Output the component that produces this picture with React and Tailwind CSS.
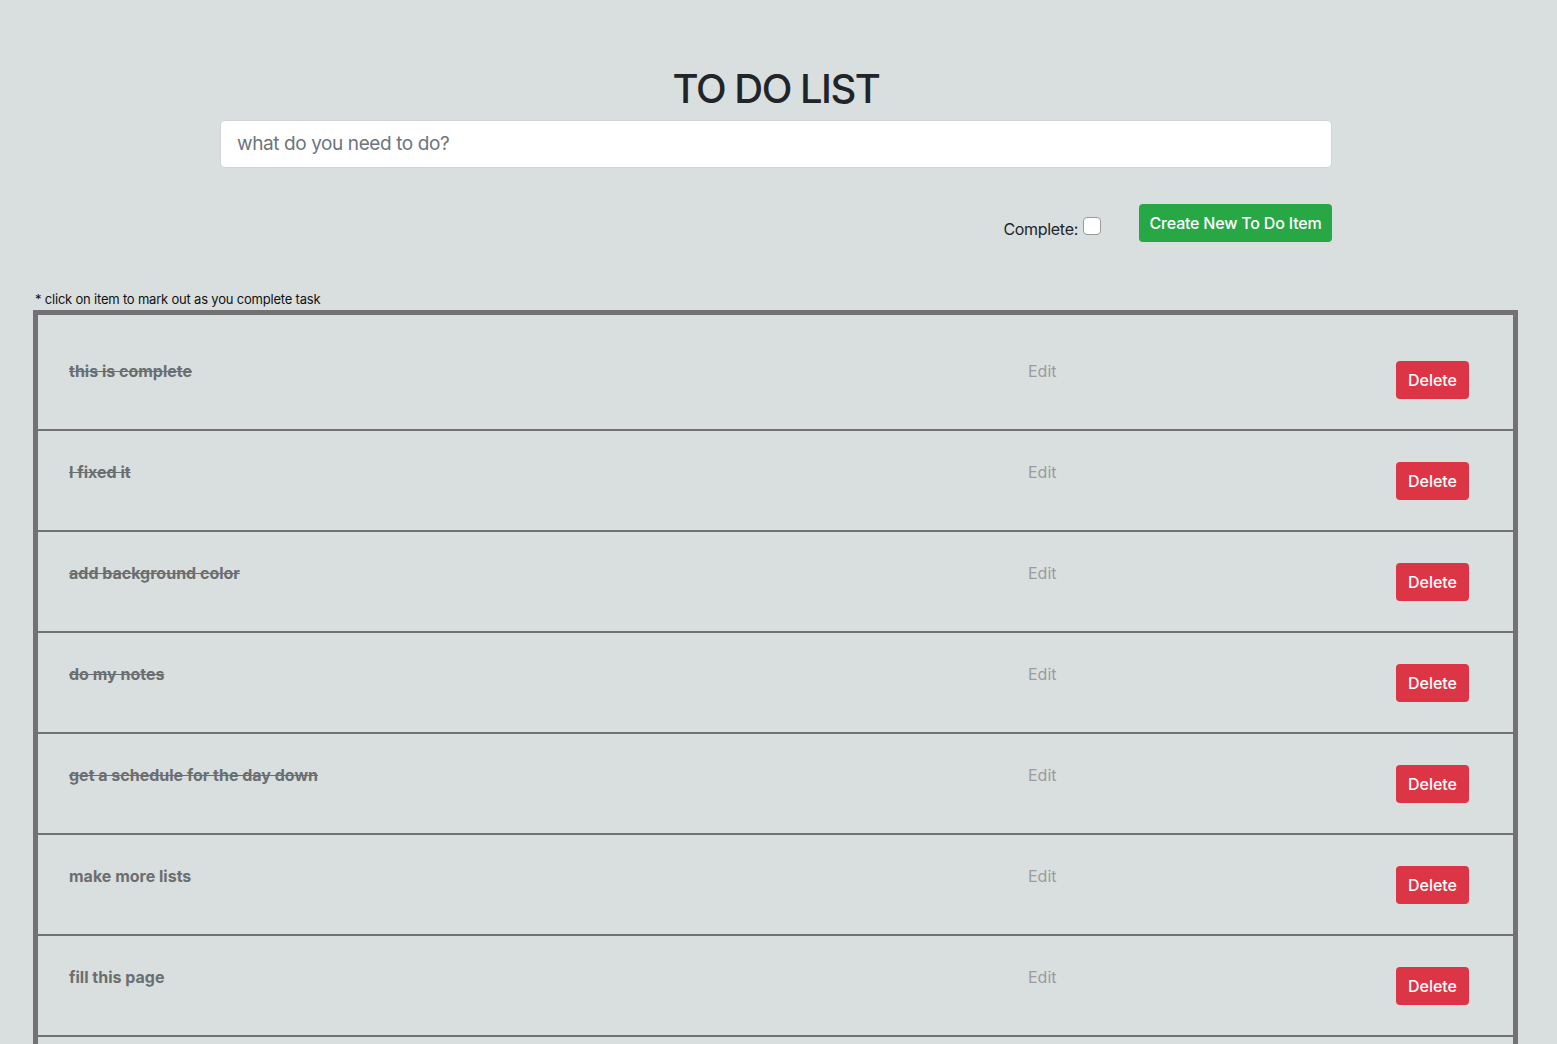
import React from "react";

const items = [
  { text: "this is complete", done: true },
  { text: "I fixed it", done: true },
  { text: "add background color", done: true },
  { text: "do my notes", done: true },
  { text: "get a schedule for the day down", done: true },
  { text: "make more lists", done: false },
  { text: "fill this page", done: false },
  { text: "another item", done: false },
];

export default function App() {
  return (
    <div
      className="min-h-screen bg-[#d9dfdf] text-[#212529] overflow-hidden"
      style={{ fontFamily: 'Inter, "Liberation Sans", sans-serif' }}
    >
      <div className="w-[1112px] ml-[220px]">
        <h1 className="pt-[65px] text-center text-[40px] leading-[48px] font-medium tracking-[-1.5px]">
          TO DO LIST
        </h1>
        <div className="mt-[7px] h-[48px] bg-white border border-[#ced4da] rounded-[5px] flex items-center px-4">
          <span className="text-[19px] tracking-[-0.4px] text-[#6c757d]">what do you need to do?</span>
        </div>
        <div className="mt-[36px] flex justify-end items-start">
          <div className="flex items-start mt-[13px]">
            <span className="text-[16px] leading-[24px] tracking-[-0.3px]">Complete:</span>
            <span className="ml-[5px] w-[18px] h-[18px] bg-white border border-[#9a9a9a] rounded-[4px]" />
          </div>
          <button className="ml-[38px] w-[193px] h-[38px] bg-[#28a745] text-white text-[16px] font-medium tracking-[-0.2px] rounded-[4px]">
            Create New To Do Item
          </button>
        </div>
      </div>
      <div className="mt-[49px] ml-[35px] text-[13px] leading-[16px] tracking-[-0.2px] text-[#111]">
        * click on item to mark out as you complete task
      </div>
      <div className="mt-[3px] ml-[33px] w-[1485px] border-[5px] border-b-0 border-[#727272] pt-[15px]">
        {items.map((it, i) => (
          <div key={i} className="h-[101px] border-b-2 border-[#727272] flex">
            <div className="w-[990px] pl-[31px] pt-[29px]">
              <span
                className={
                  "text-[16px] leading-[24px] font-bold text-[#6b6e70] " +
                  (it.done ? "line-through" : "")
                }
              >
                {it.text}
              </span>
            </div>
            <div className="pt-[29px]">
              <span className="text-[16px] leading-[24px] text-[#9a9c9d]">Edit</span>
            </div>
            <div className="flex-1 flex items-center justify-end pr-[44px]">
              <button className="h-[38px] px-[12px] bg-[#dc3545] text-white text-[16px] font-medium rounded-[4px]">
                Delete
              </button>
            </div>
          </div>
        ))}
      </div>
    </div>
  );
}
